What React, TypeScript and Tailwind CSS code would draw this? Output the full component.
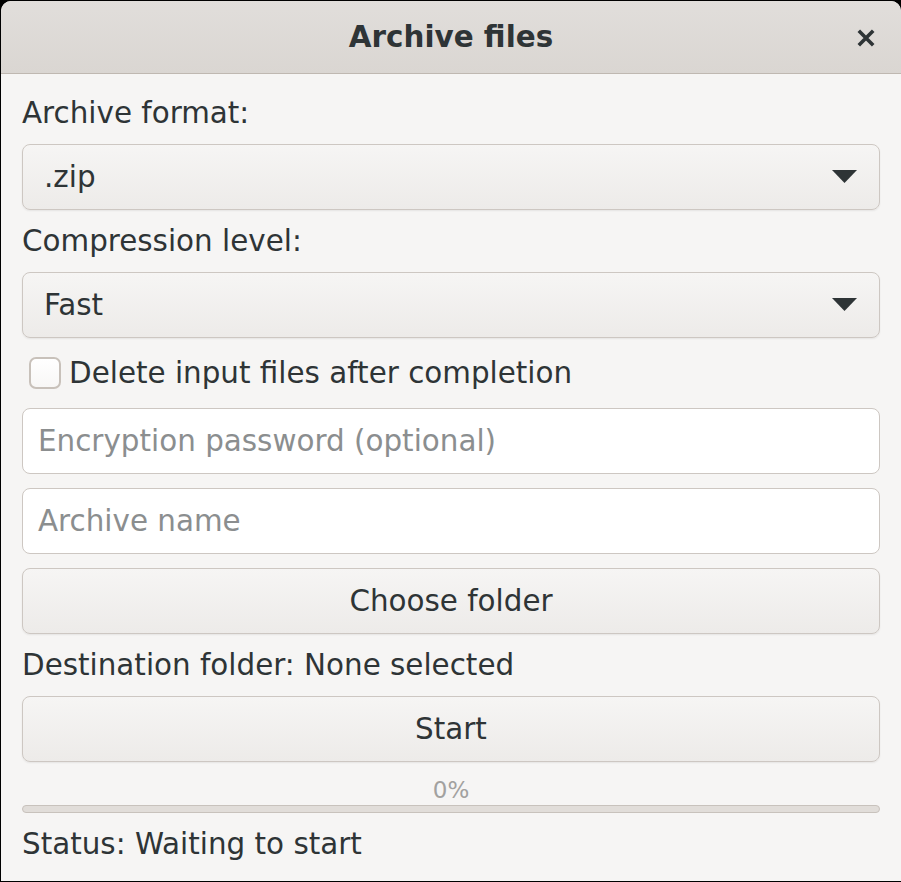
import React from "react";

const font = { fontFamily: '"DejaVu Sans", "Noto Sans", sans-serif' };

function Combo({ value }: { value: string }) {
  return (
    <div className="flex h-[66px] items-center justify-between rounded-[8px] border border-[#cdc7c2] bg-gradient-to-b from-[#f6f5f4] to-[#edebe9] pl-[21px] pr-[22px] shadow-[0_1px_2px_rgba(0,0,0,0.07)]">
      <span className="text-[29.4px] text-[#2e3436]">{value}</span>
      <svg width="25" height="14" viewBox="0 0 25 14">
        <polygon points="0,0 25,0 12.5,13" fill="#2e3436" />
      </svg>
    </div>
  );
}

function Entry({ placeholder }: { placeholder: string }) {
  return (
    <div className="flex h-[66px] items-center rounded-[8px] border border-[#cdc7c2] bg-white pl-[15px]">
      <span className="text-[29.4px] text-[#8b8e8f]">{placeholder}</span>
    </div>
  );
}

function Button({ label }: { label: string }) {
  return (
    <div className="flex h-[66px] items-center justify-center rounded-[8px] border border-[#cdc7c2] bg-gradient-to-b from-[#f6f5f4] to-[#edebe9] shadow-[0_1px_2px_rgba(0,0,0,0.07)]">
      <span className="text-[29.4px] text-[#2e3436]">{label}</span>
    </div>
  );
}

export default function App() {
  return (
    <div className="h-[882px] w-[901px] bg-black pl-[1px] pt-[1px] pb-[1px]" style={font}>
      <div className="flex h-[880px] w-[900px] flex-col overflow-hidden rounded-t-[10px] bg-[#f6f5f4]">
        <div className="relative flex h-[73px] shrink-0 items-center justify-center border-b border-[#bfb8b1] bg-gradient-to-b from-[#e1dedb] to-[#dad6d2]">
          <span className="text-[29.4px] font-bold text-[#2e3436]">Archive files</span>
          <svg
            className="absolute right-[26px] top-[28px]"
            width="18"
            height="18"
            viewBox="0 0 18 18"
          >
            <path d="M1.8 1.8 L16.2 16.2 M16.2 1.8 L1.8 16.2" stroke="#2e3436" strokeWidth="3.6" strokeLinecap="butt" />
          </svg>
        </div>
        <div className="flex flex-col gap-[14px] px-[21px] pt-[22px]">
          <div className="flex h-[34px] items-center text-[29.4px] text-[#2e3436]">Archive format:</div>
          <Combo value=".zip" />
          <div className="flex h-[34px] items-center text-[29.4px] text-[#2e3436]">Compression level:</div>
          <Combo value="Fast" />
          <div className="flex h-[42px] items-center gap-[8px] pl-[7px]">
            <div className="h-[32px] w-[32px] rounded-[7px] border-2 border-[#c8c1ba] bg-gradient-to-b from-white to-[#f8f7f6]" />
            <span className="text-[29.4px] text-[#2e3436]">Delete input files after completion</span>
          </div>
          <Entry placeholder="Encryption password (optional)" />
          <Entry placeholder="Archive name" />
          <Button label="Choose folder" />
          <div className="flex h-[34px] items-center text-[29.4px] text-[#2e3436]">Destination folder: None selected</div>
          <Button label="Start" />
          <div className="flex flex-col">
            <div className="flex h-[29px] items-center justify-center text-[23px] text-[#a2a19f]">0%</div>
            <div className="h-[8px] rounded-full border border-[#c8c2bc] bg-[#e1ddd9]" />
          </div>
          <div className="flex h-[34px] items-center text-[29.4px] text-[#2e3436]">Status: Waiting to start</div>
        </div>
      </div>
    </div>
  );
}
